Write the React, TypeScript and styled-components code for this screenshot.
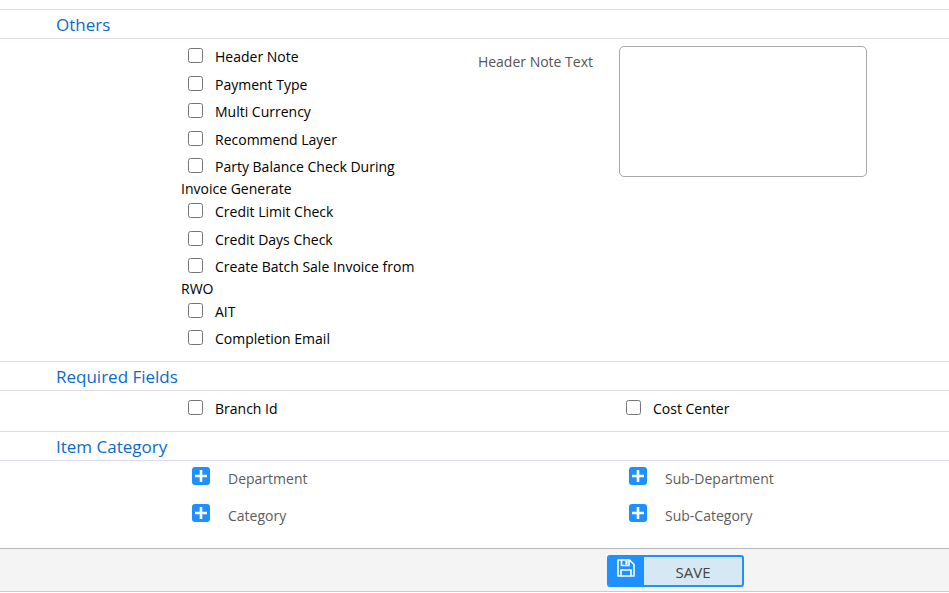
import React from "react";
import styled, { createGlobalStyle } from "styled-components";

const GlobalStyle = createGlobalStyle`
  * { box-sizing: border-box; }
  body {
    margin: 0;
    background: #fff;
    color: #000;
    font-family: "Segoe UI", "Open Sans", "Noto Sans", sans-serif;
    font-size: 14px;
    line-height: 22px;
  }
`;

const Page = styled.main`
  padding-top: 9px;
`;

const SectionTitle = styled.h2`
  margin: 0;
  padding: 2px 0 0 56px;
  border-top: 1px solid #dcdcea;
  border-bottom: 1px solid #dcdcea;
  color: #0b6bcb;
  font-size: 17px;
  font-weight: 400;
  line-height: 26px;
`;

const Columns = styled.div<{ $kind: "note" | "pair" }>`
  display: grid;
  grid-template-columns: ${(p) =>
    p.$kind === "note" ? "181fr 257fr 155fr 26fr 248fr 82fr" : "181fr 438fr 330fr"};
  align-items: start;
  padding: ${(p) => (p.$kind === "note" ? "7px 0 5px" : "7px 0 6px")};
`;

const CheckList = styled.div`
  grid-column: 2;
  display: flex;
  flex-direction: column;
  min-height: 310px;
`;

const CheckLabel = styled.label<{ $wraps?: boolean }>`
  flex: 1 0 ${(p) => (p.$wraps ? "44px" : "27px")};
  min-height: 27px;
`;

const CheckBox = styled.input`
  width: 15px;
  height: 15px;
  margin: 0 12px 0 7px;
  vertical-align: -1px;
`;

const NoteLabel = styled.label`
  grid-column: 3;
  padding-top: 5px;
  color: #555;
  text-align: right;
`;

const NoteBox = styled.textarea`
  grid-column: 5;
  width: 100%;
  height: 131px;
  border: 1px solid #a9a9a9;
  border-radius: 5px;
  background: #fff;
  font: inherit;
  resize: none;
`;

const CheckCell = styled.div<{ $column: number }>`
  grid-column: ${(p) => p.$column};
  min-height: 27px;
`;

const CategoryGrid = styled.div`
  display: grid;
  grid-template-columns: 192fr 437fr 320fr;
  row-gap: 14px;
  padding: 6px 0 21px;
`;

const CategoryItem = styled.div<{ $column: number }>`
  grid-column: ${(p) => p.$column};
  display: flex;
  align-items: flex-start;
  gap: 18px;
  color: #5c5c5c;
`;

const CategoryName = styled.span`
  padding-top: 1px;
`;

const AddButton = styled.button`
  display: block;
  padding: 0;
  border: 0;
  background: none;
  line-height: 0;
  cursor: pointer;
`;

const Footer = styled.footer`
  display: grid;
  grid-template-columns: 607fr 342fr;
  padding: 6px 0 4px;
  border-top: 1px solid #b9b9b9;
  border-bottom: 1px solid #c8cccf;
  background: #f4f4f4;
`;

const SaveButton = styled.button`
  grid-column: 2;
  display: flex;
  align-items: stretch;
  width: 137px;
  height: 32px;
  padding: 0;
  border: 2px solid #1e90ff;
  border-radius: 3px;
  overflow: hidden;
  background: #d6e8f3;
  color: #444;
  font: inherit;
  font-size: 15px;
  cursor: pointer;
`;

const SaveIcon = styled.span`
  display: flex;
  align-items: flex-start;
  justify-content: center;
  width: 35px;
  padding: 2px 2px 0 0;
  background: #1e90ff;
`;

const SaveText = styled.span`
  flex: 1;
  line-height: 30px;
`;

const OPTIONS: { text: string; wraps?: boolean }[] = [
  { text: "Header Note" },
  { text: "Payment Type" },
  { text: "Multi Currency" },
  { text: "Recommend Layer" },
  { text: "Party Balance Check During Invoice Generate", wraps: true },
  { text: "Credit Limit Check" },
  { text: "Credit Days Check" },
  { text: "Create Batch Sale Invoice from RWO", wraps: true },
  { text: "AIT" },
  { text: "Completion Email" },
];

const CATEGORIES = [
  ["Department", "Sub-Department"],
  ["Category", "Sub-Category"],
];

function Check({ text, wraps }: { text: string; wraps?: boolean }) {
  return (
    <CheckLabel $wraps={wraps}>
      <CheckBox type="checkbox" />
      {text}
    </CheckLabel>
  );
}

function PlusIcon() {
  return (
    <svg width="18" height="18" viewBox="0 0 18 18" aria-hidden="true">
      <rect width="18" height="18" rx="3" fill="#1e90ff" />
      <path d="M9 3v12M3 9h12" stroke="#fff" strokeWidth="2.6" />
    </svg>
  );
}

function FloppyIcon() {
  return (
    <svg width="18" height="18" viewBox="0 0 18 18" fill="none" stroke="#fff" strokeWidth="1.6" aria-hidden="true">
      <path d="M1 1h11.5L17 5.500V17H1z" strokeLinejoin="round" />
      <path d="M4.500 1v5.500h7.500V1M4 17v-6h10v6" />
      <path d="M9.500 2v3.500" strokeWidth="2.200" />
    </svg>
  );
}

export default function App() {
  return (
    <>
      <GlobalStyle />
      <Page>
        <SectionTitle>Others</SectionTitle>
        <Columns $kind="note">
          <CheckList>
            {OPTIONS.map((o) => (
              <Check key={o.text} text={o.text} wraps={o.wraps} />
            ))}
          </CheckList>
          <NoteLabel htmlFor="header-note">Header Note Text</NoteLabel>
          <NoteBox id="header-note" />
        </Columns>

        <SectionTitle>Required Fields</SectionTitle>
        <Columns $kind="pair">
          <CheckCell $column={2}>
            <Check text="Branch Id" />
          </CheckCell>
          <CheckCell $column={3}>
            <Check text="Cost Center" />
          </CheckCell>
        </Columns>

        <SectionTitle>Item Category</SectionTitle>
        <CategoryGrid>
          {CATEGORIES.map((row) =>
            row.map((name, i) => (
              <CategoryItem key={name} $column={i + 2}>
                <AddButton type="button" aria-label={`Add ${name}`}>
                  <PlusIcon />
                </AddButton>
                <CategoryName>{name}</CategoryName>
              </CategoryItem>
            ))
          )}
        </CategoryGrid>

        <Footer>
          <SaveButton type="button">
            <SaveIcon>
              <FloppyIcon />
            </SaveIcon>
            <SaveText>SAVE</SaveText>
          </SaveButton>
        </Footer>
      </Page>
    </>
  );
}
